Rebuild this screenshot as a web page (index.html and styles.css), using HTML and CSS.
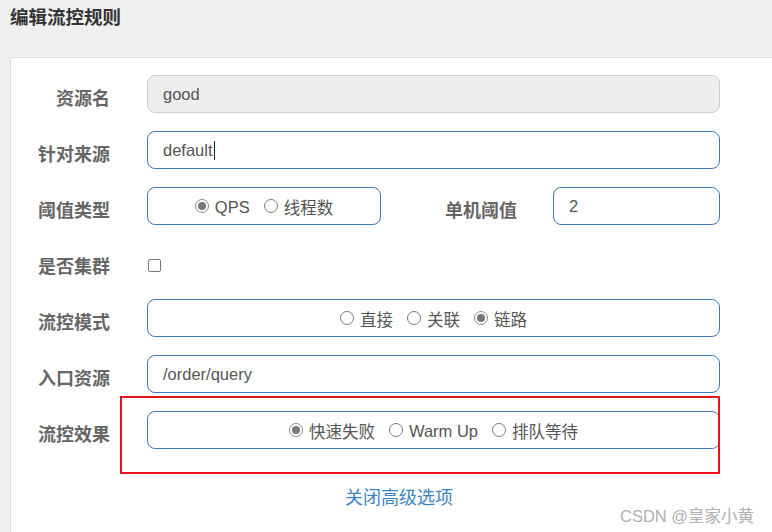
FILE: index.html
```html
<!DOCTYPE html>
<html lang="zh">
<head>
<meta charset="utf-8">
<link rel="stylesheet" href="styles.css">
</head>
<body>
<div class="title">编辑流控规则</div>
<div class="card">
  <div class="row">
    <div class="label">资源名</div>
    <div class="input disabled">good</div>
  </div>
  <div class="row">
    <div class="label">针对来源</div>
    <div class="input">default<span class="caret"></span></div>
  </div>
  <div class="row">
    <div class="label">阈值类型</div>
    <div class="group small">
      <span class="opt"><span class="radio on"></span>QPS</span>
      <span class="opt"><span class="radio"></span>线程数</span>
    </div>
    <div class="label2">单机阈值</div>
    <div class="input short">2</div>
  </div>
  <div class="row">
    <div class="label">是否集群</div>
    <span class="checkbox"></span>
  </div>
  <div class="row">
    <div class="label">流控模式</div>
    <div class="group">
      <span class="opt"><span class="radio"></span>直接</span>
      <span class="opt"><span class="radio"></span>关联</span>
      <span class="opt"><span class="radio on"></span>链路</span>
    </div>
  </div>
  <div class="row">
    <div class="label">入口资源</div>
    <div class="input">/order/query</div>
  </div>
  <div class="row">
    <div class="label">流控效果</div>
    <div class="group">
      <span class="opt"><span class="radio on"></span>快速失败</span>
      <span class="opt"><span class="radio"></span>Warm Up</span>
      <span class="opt"><span class="radio"></span>排队等待</span>
    </div>
  </div>
  <div class="more"><a class="link">关闭高级选项</a></div>
  <div class="highlight"></div>
</div>
<div class="watermark">CSDN @皇家小黄</div>
</body>
</html>
```
FILE: styles.css
```css
html, body {
  margin: 0;
  padding: 0;
  background: #f0f0f0;
  font-family: "Liberation Sans", "Noto Sans CJK SC", sans-serif;
  overflow: hidden;
  height: 532px;
}
.title {
  height: 36px;
  line-height: 36px;
  padding-left: 10px;
  margin-bottom: 21px;
  font-size: 18.5px;
  font-weight: bold;
  color: #333;
}
.card {
  position: relative;
  margin-left: 10px;
  width: 800px;
  height: 475px;
  background: #fff;
  border: 1px solid #ddd;
  border-bottom: none;
  border-radius: 4px 4px 0 0;
  padding-top: 17px;
  box-sizing: border-box;
}
.row {
  display: flex;
  align-items: center;
  height: 38px;
  margin-bottom: 18px;
}
.label {
  width: 99px;
  margin-right: 37px;
  margin-top: 6px;
  text-align: right;
  font-size: 18px;
  font-weight: bold;
  color: #666;
}
.label2 {
  width: 136px;
  margin-right: 36px;
  margin-top: 6px;
  text-align: right;
  font-size: 18px;
  font-weight: bold;
  color: #666;
}
.input {
  box-sizing: border-box;
  width: 573px;
  height: 38px;
  line-height: 36px;
  padding-left: 15px;
  border: 1px solid #3c7bb9;
  border-radius: 8px;
  font-size: 16.5px;
  color: #555;
  display: flex;
  align-items: center;
}
.input.disabled {
  background: #eee;
  border-color: #ccc;
}
.input.short {
  width: 167px;
}
.caret {
  display: inline-block;
  width: 1px;
  height: 19px;
  background: #222;
  margin-left: 1px;
}
.group {
  box-sizing: border-box;
  width: 573px;
  height: 38px;
  border: 1px solid #3c7bb9;
  border-radius: 8px;
  display: flex;
  align-items: center;
  justify-content: center;
  gap: 14px;
  font-size: 16.5px;
  color: #555;
  padding-top: 2px;
}
.group.small {
  width: 234px;
}
.opt {
  display: flex;
  align-items: center;
  gap: 6px;
}
.radio {
  box-sizing: border-box;
  width: 14px;
  height: 14px;
  border: 1px solid #7a7a7a;
  border-radius: 50%;
  position: relative;
  margin-top: -2px;
}
.radio.on {
  border-color: #8a8a8a;
}
.radio.on::after {
  content: "";
  position: absolute;
  left: 2px;
  top: 2px;
  width: 8px;
  height: 8px;
  border-radius: 50%;
  background: #777;
}
.checkbox {
  box-sizing: border-box;
  width: 13px;
  height: 13px;
  margin-left: 1px;
  margin-top: 7px;
  border: 1px solid #777;
  border-radius: 2px;
}
.more {
  padding-top: 19px;
  padding-left: 334px;
  line-height: 24px;
  font-size: 18px;
}
.link {
  color: #3c83c4;
}
.highlight {
  position: absolute;
  left: 109px;
  top: 338px;
  width: 600px;
  height: 78px;
  box-sizing: border-box;
  border: 2px solid #e8141c;
}
.watermark {
  position: absolute;
  left: 620px;
  top: 503px;
  font-size: 16.5px;
  color: #b0b0b0;
  text-shadow: 0 0 2px #fff, 0 0 2px #fff;
}
```
